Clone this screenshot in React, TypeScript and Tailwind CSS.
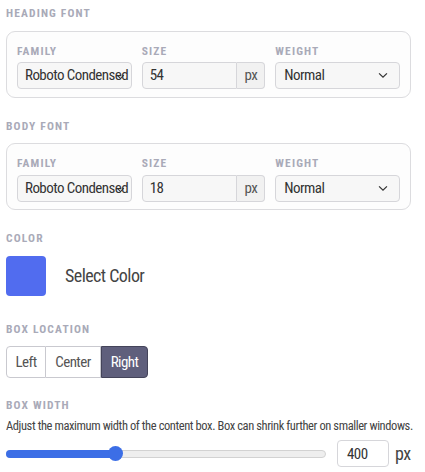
import React from 'react';

const font = { fontFamily: '"Roboto Condensed", Roboto, "Liberation Sans", sans-serif' };

function Label({ children, className = '' }: { children: React.ReactNode; className?: string }) {
  return (
    <div className={`text-[11.5px] font-bold tracking-[0.1em] text-[#a9aab8] leading-none ${className}`}>
      {children}
    </div>
  );
}

function Chevron({ className = '' }: { className?: string }) {
  return (
    <svg viewBox="0 0 12 8" className={className} fill="none" stroke="#333" strokeWidth="1.4">
      <path d="M1.5 1.5 L6 6 L10.5 1.5" />
    </svg>
  );
}

function FontBox({ size }: { size: string }) {
  return (
    <div className="mt-[11px] w-[405px] h-[67px] rounded-[9px] border border-[#dcdcdf] bg-[#fdfdfd] px-[10px] pt-[14px] flex gap-[10px]">
      <div className="w-[115px]">
        <Label>FAMILY</Label>
        <div className="relative mt-[5px] h-[27px] rounded-[4px] border border-[#d6d6da] bg-[#f7f7f7] pl-[7px] flex items-center text-[15px] text-[#333] overflow-hidden whitespace-nowrap">
          Roboto Condensed
          <Chevron className="absolute right-[6px] top-[11px] w-[9px] h-[6px]" />
        </div>
      </div>
      <div className="w-[124px]">
        <Label>SIZE</Label>
        <div className="mt-[5px] h-[27px] flex">
          <div className="flex-1 rounded-l-[4px] border border-[#d6d6da] bg-[#f7f7f7] pl-[7px] flex items-center text-[15px] text-[#333]">
            {size}
          </div>
          <div className="w-[28px] rounded-r-[4px] border border-l-0 border-[#d6d6da] bg-[#f1f1f1] flex items-center justify-center text-[15px] text-[#555]">
            px
          </div>
        </div>
      </div>
      <div className="w-[125px]">
        <Label>WEIGHT</Label>
        <div className="mt-[5px] h-[27px] rounded-[4px] border border-[#d6d6da] bg-[#f7f7f7] pl-[8px] pr-[10px] flex items-center justify-between text-[15px] text-[#333]">
          Normal
          <Chevron className="w-[12px] h-[7px]" />
        </div>
      </div>
    </div>
  );
}

export default function App() {
  return (
    <div style={font} className="w-[425px] h-[472px] bg-white px-[6px] pt-[8px] overflow-hidden tracking-[-0.035em]">
      <Label>HEADING FONT</Label>
      <FontBox size="54" />

      <Label className="mt-[23px]">BODY FONT</Label>
      <FontBox size="18" />

      <Label className="mt-[23px]">COLOR</Label>
      <div className="mt-[11px] flex items-center gap-[19px]">
        <div className="w-[40px] h-[40px] rounded-[4px] bg-[#516cef]" />
        <span className="text-[18px] text-[#444]">Select Color</span>
      </div>

      <Label className="mt-[28px]">BOX LOCATION</Label>
      <div className="mt-[11px] flex h-[32px] text-[15px]">
        <div className="w-[40px] rounded-l-[4px] border border-[#c9c9cf] bg-white text-[#555] flex items-center justify-center">Left</div>
        <div className="w-[55px] border-y border-r border-[#c9c9cf] bg-white text-[#555] flex items-center justify-center">Center</div>
        <div className="w-[47px] rounded-r-[4px] border border-[#44445a] bg-[#5f5f7c] text-white flex items-center justify-center">Right</div>
      </div>

      <Label className="mt-[22px]">BOX WIDTH</Label>
      <div className="mt-[5px] text-[12.5px] text-[#444] whitespace-nowrap tracking-[-0.033em]">
        Adjust the maximum width of the content box. Box can shrink further on smaller windows.
      </div>
      <div className="mt-[5px] flex items-center">
        <div className="relative w-[320px] h-[8px] rounded-full border border-[#d2d2d2] bg-[#eeeeee]">
          <div className="absolute left-[-1px] top-[-1px] h-[8px] w-[110px] rounded-l-full bg-[#3c6ee6]" />
          <div className="absolute left-[101px] top-[-5px] w-[15px] h-[15px] rounded-full bg-[#3c6ee6]" />
        </div>
        <div className="ml-[11px] w-[52px] h-[27px] rounded-[4px] border border-[#d6d6da] bg-white pl-[9px] flex items-center text-[15px] text-[#333]">
          400
        </div>
        <span className="ml-[6px] text-[18px] text-[#444]">px</span>
      </div>
    </div>
  );
}
